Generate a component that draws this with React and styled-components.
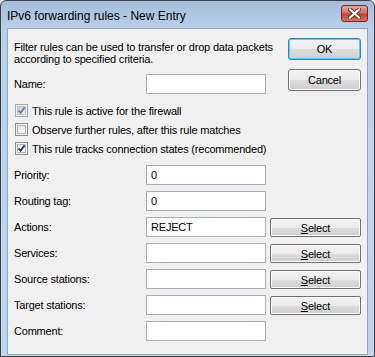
import styled, { createGlobalStyle } from "styled-components";

const GlobalStyle = createGlobalStyle`
  html, body {
    margin: 0;
    padding: 0;
    background: #ffffff;
  }
  body {
    font-family: Tahoma, "Liberation Sans", Arial, sans-serif;
    font-size: 11px;
    letter-spacing: -0.2px;
    color: #000;
  }
`;

const Window = styled.div`
  width: 375px;
  height: 357px;
  box-sizing: border-box;
  border: 1px solid #3b4046;
  border-radius: 6px 6px 0 0;
  background: linear-gradient(#a3bddb, #bad0ea 28px, #c2d7ee);
  padding: 0 6px 1px 6px;
  display: flex;
  flex-direction: column;
`;

const TitleBar = styled.div`
  height: 27px;
  display: flex;
  justify-content: space-between;
  align-items: flex-start;
`;

const Title = styled.div`
  font-size: 12px;
  line-height: 12px;
  letter-spacing: 0;
  margin-top: 9px;
  color: #000;
`;

const CloseButton = styled.div`
  margin-top: 4px;
  width: 27px;
  height: 17px;
  box-sizing: border-box;
  border: 1px solid #6e2b22;
  border-radius: 3px;
  background: linear-gradient(#e6a89e, #d7705f 45%, #c2412c 55%, #d3775f);
  display: flex;
  align-items: center;
  justify-content: center;
`;

const Client = styled.div`
  flex: 1;
  min-height: 0;
  border: 1px solid #8fa4bf;
  background: #f0f0f0;
  padding: 9px 6px 0 6px;
`;

const Header = styled.div`
  display: flex;
  justify-content: space-between;
  align-items: flex-start;
`;

const Intro = styled.div`
  flex: 1;
  min-width: 0;
  display: flex;
  flex-direction: column;
`;

const Description = styled.p`
  margin: 3px 0 0 0;
  line-height: 12px;
  white-space: nowrap;
`;

const ButtonColumn = styled.div`
  flex-shrink: 0;
  display: flex;
  flex-direction: column;
  gap: 9px;
`;

const DialogButton = styled.button`
  width: 73px;
  height: 22px;
  box-sizing: border-box;
  border: 1px solid ${(p) => (p.$default ? "#3c7fb1" : "#707070")};
  border-radius: 3px;
  box-shadow: inset 0 0 0 1px ${(p) => (p.$default ? "#48d4f8" : "#fcfcfc")};
  background: linear-gradient(#f2f2f2, #ebebeb 50%, #dddddd 51%, #cfcfcf);
  font-family: inherit;
  font-size: 11px;
  letter-spacing: inherit;
  color: #000;
  padding: 0;
`;

const FieldRow = styled.div`
  display: grid;
  grid-template-columns: 128px 120px 91px;
  column-gap: 4px;
  align-items: center;
  height: 20px;
  margin-top: ${(p) => p.$top || 6}px;
`;

const Label = styled.span`
  line-height: 13px;
`;

const TextBox = styled.div`
  height: 20px;
  box-sizing: border-box;
  border: 1px solid #a9aeb5;
  background: #ffffff;
  padding: 0 4px;
  display: flex;
  align-items: center;
`;

const SelectButton = styled.button`
  height: 19px;
  box-sizing: border-box;
  border: 1px solid #707070;
  border-radius: 2px;
  box-shadow: inset 0 0 0 1px #fafafa;
  background: linear-gradient(#f2f2f2, #ebebeb 50%, #dddddd 51%, #cfcfcf);
  font-family: inherit;
  font-size: 11px;
  letter-spacing: inherit;
  color: #000;
  padding: 0;
  margin-top: 1px;

  & u {
    text-decoration: underline;
  }
`;

const CheckList = styled.div`
  margin-top: 7px;
  display: flex;
  flex-direction: column;
`;

const CheckRow = styled.label`
  height: 19px;
  display: flex;
  align-items: center;
  gap: 4px;
  padding-left: 1px;
`;

const Box = ({ checked, dim }) => (
  <svg width="13" height="13" viewBox="0 0 13 13">
    <defs>
      <linearGradient id={dim ? "cbDim" : "cbNorm"} x1="0" y1="0" x2="1" y2="1">
        <stop offset="0" stopColor={dim ? "#c9ccd1" : "#dfe3e8"} />
        <stop offset="1" stopColor={dim ? "#f2f2f2" : "#ffffff"} />
      </linearGradient>
    </defs>
    <rect x="0.5" y="0.5" width="12" height="12" fill="#f4f4f4" stroke={dim ? "#a7a9ad" : "#8e8f8f"} />
    <rect x="2.5" y="2.5" width="8" height="8" fill={dim || !checked ? `url(#${dim ? "cbDim" : "cbNorm"})` : "#ffffff"} stroke={dim ? "#bcc1c7" : "#b1b5ba"} />
    {checked && (
      <polyline
        points="3.6,6.4 5.6,8.8 9.6,3.4"
        fill="none"
        stroke={dim ? "#6b7db0" : "#1e3b8f"}
        strokeWidth="1.8"
      />
    )}
  </svg>
);

const CheckItem = ({ checked, dim, children }) => (
  <CheckRow>
    <Box checked={checked} dim={dim} />
    <span>{children}</span>
  </CheckRow>
);

const Field = ({ label, value, select, top }) => (
  <FieldRow $top={top}>
    <Label>{label}</Label>
    <TextBox>{value}</TextBox>
    {select && (
      <SelectButton>
        <u>S</u>elect
      </SelectButton>
    )}
  </FieldRow>
);

export default function App() {
  return (
    <>
      <GlobalStyle />
      <Window>
        <TitleBar>
          <Title>IPv6 forwarding rules - New Entry</Title>
          <CloseButton>
            <svg width="13" height="11" viewBox="0 0 13 11">
              <path d="M2 1.5 L11 9.5 M11 1.5 L2 9.5" stroke="#5a2a24" strokeWidth="4" strokeLinecap="square" />
              <path d="M2 1.5 L11 9.5 M11 1.5 L2 9.5" stroke="#ffffff" strokeWidth="2.2" strokeLinecap="square" />
            </svg>
          </CloseButton>
        </TitleBar>
        <Client>
          <Header>
            <Intro>
              <Description>
                Filter rules can be used to transfer or drop data packets
                <br />
                according to specified criteria.
              </Description>
              <Field label="Name:" top={9} />
            </Intro>
            <ButtonColumn>
              <DialogButton $default>OK</DialogButton>
              <DialogButton>Cancel</DialogButton>
            </ButtonColumn>
          </Header>
          <CheckList>
            <CheckItem checked dim>This rule is active for the firewall</CheckItem>
            <CheckItem>Observe further rules, after this rule matches</CheckItem>
            <CheckItem checked>This rule tracks connection states (recommended)</CheckItem>
          </CheckList>
          <Field label="Priority:" value="0" top={7} />
          <Field label="Routing tag:" value="0" />
          <Field label="Actions:" value="REJECT" select />
          <Field label="Services:" select />
          <Field label="Source stations:" select />
          <Field label="Target stations:" select />
          <Field label="Comment:" />
        </Client>
      </Window>
    </>
  );
}
